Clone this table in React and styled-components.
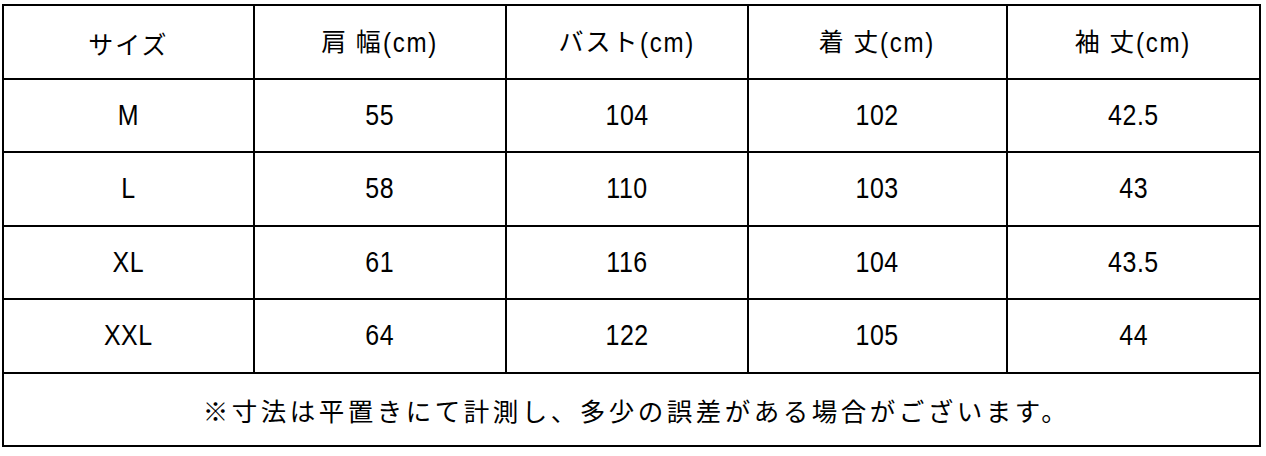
import React from "react";
import styled, { createGlobalStyle } from "styled-components";

const GlobalStyle = createGlobalStyle`
  html, body {
    margin: 0;
    padding: 0;
    background: #ffffff;
  }
  body {
    padding: 4px 0 0 2px;
  }
`;

const LATIN = `"Liberation Sans", "Noto Sans CJK JP", sans-serif`;
const JP = `"Noto Sans CJK JP", "Liberation Sans", sans-serif`;

const Table = styled.div`
  display: grid;
  grid-template-columns: 251px 252px 242px 259px 253px;
  grid-auto-rows: 73.5px;
  width: 1259px;
  box-sizing: border-box;
  border-left: 2px solid #000;
  border-top: 2px solid #000;
  color: #000;
`;

const Cell = styled.div`
  display: flex;
  align-items: center;
  justify-content: center;
  box-sizing: border-box;
  border-right: 2px solid #000;
  border-bottom: 2px solid #000;
  font-family: ${(p) => (p.$head ? JP : LATIN)};
  font-size: 25px;
  letter-spacing: 2px;
  white-space: nowrap;
`;

const Label = styled.span`
  display: inline-block;
  line-height: 1.2;
  padding-top: 2px;
`;

/* narrow latin glyphs like the original's condensed face */
const Narrow = styled.span`
  display: inline-block;
  font-family: ${LATIN};
  font-size: ${(p) => (p.$small ? "28px" : "29px")};
  letter-spacing: ${(p) => (p.$small ? "2px" : "0.6px")};
  transform: scaleX(0.86);
  transform-origin: ${(p) => (p.$small ? "left center" : "center")};
  margin-right: ${(p) => (p.$small ? "-8px" : "0")};
  vertical-align: ${(p) => (p.$small ? "-1px" : "baseline")};
`;

const Note = styled.div`
  grid-column: 1 / -1;
  display: flex;
  align-items: center;
  justify-content: center;
  box-sizing: border-box;
  border-right: 2px solid #000;
  border-bottom: 2px solid #000;
  font-family: ${JP};
  font-size: 25.5px;
  letter-spacing: 3.5px;
  padding-left: 10px;
`;

const headers = [
  { jp: "サイズ" },
  { jp: "肩 幅", unit: true },
  { jp: "バスト", unit: true },
  { jp: "着 丈", unit: true },
  { jp: "袖 丈", unit: true },
];

const rows = [
  ["M", "55", "104", "102", "42.5"],
  ["L", "58", "110", "103", "43"],
  ["XL", "61", "116", "104", "43.5"],
  ["XXL", "64", "122", "105", "44"],
];

export default function App() {
  return (
    <>
      <GlobalStyle />
      <Table>
        {headers.map((h) => (
          <Cell key={h.jp} $head>
            <Label>
              {h.jp}
              {h.unit && <Narrow $small>(cm)</Narrow>}
            </Label>
          </Cell>
        ))}
        {rows.map((row) =>
          row.map((v, i) => (
            <Cell key={row[0] + i}>
              <Narrow>{v}</Narrow>
            </Cell>
          ))
        )}
        <Note>※寸法は平置きにて計測し、多少の誤差がある場合がございます。</Note>
      </Table>
    </>
  );
}
